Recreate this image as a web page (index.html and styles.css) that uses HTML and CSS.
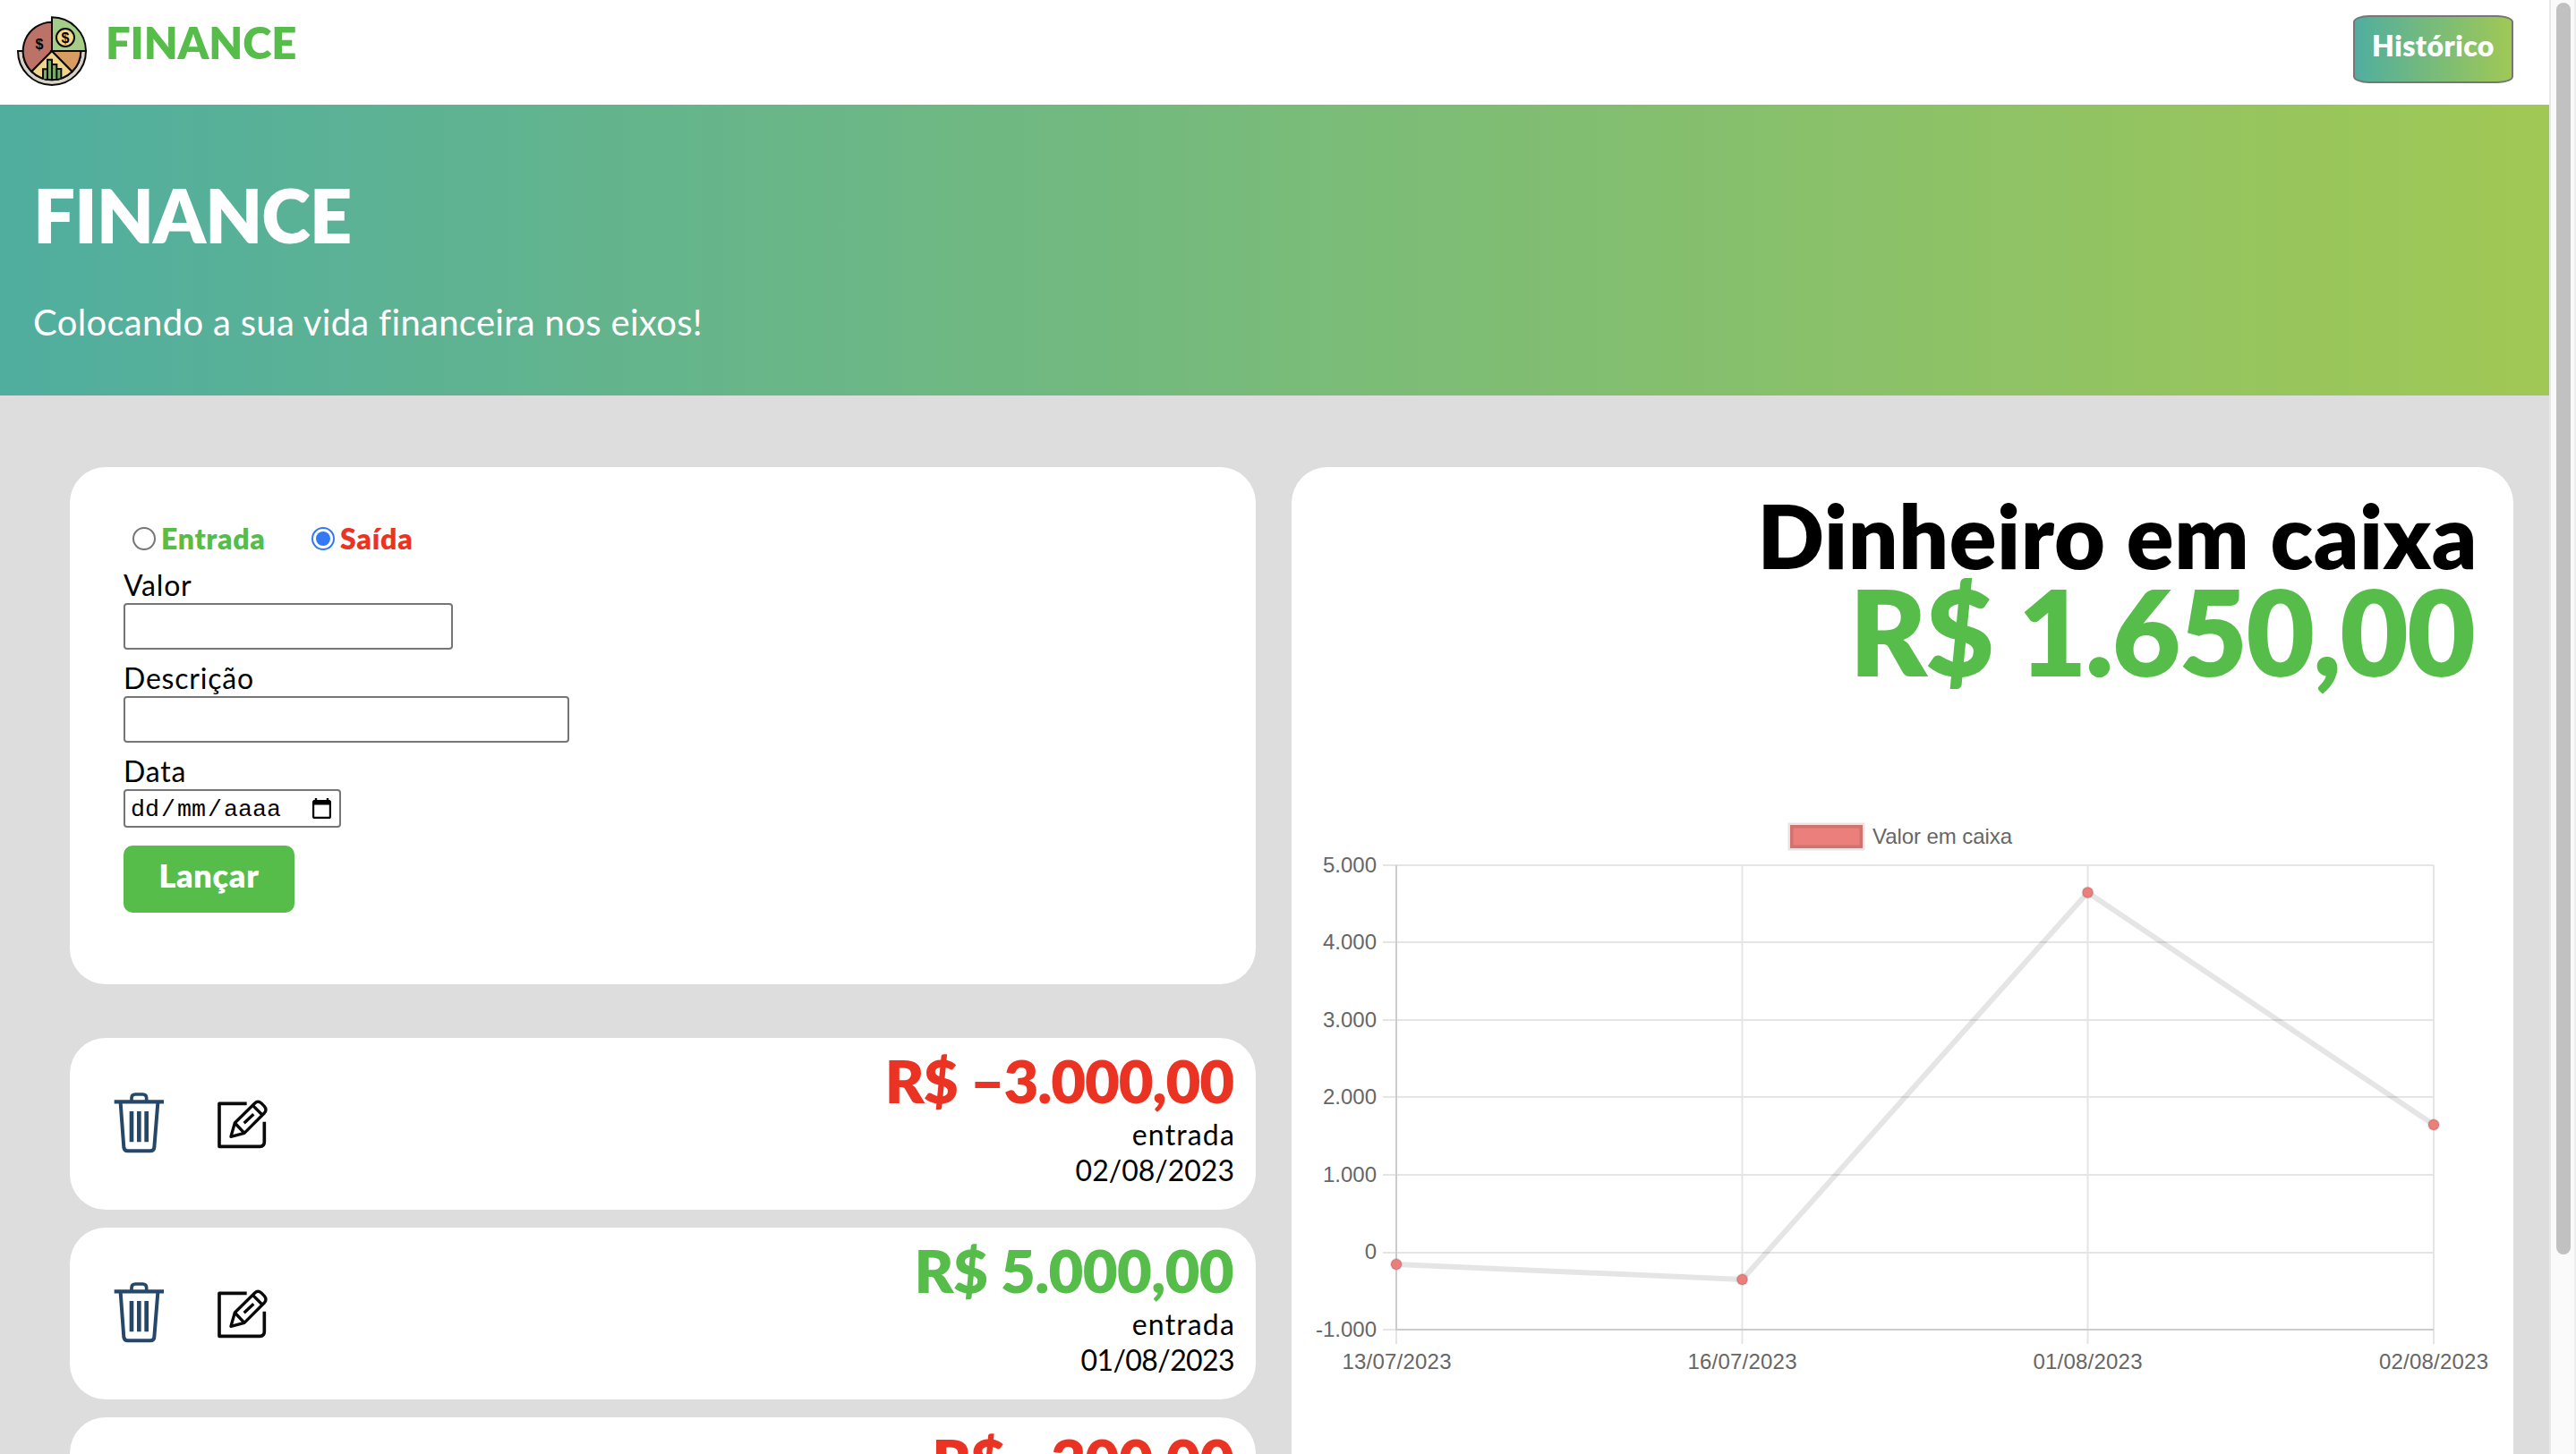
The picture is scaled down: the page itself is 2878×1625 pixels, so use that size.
FILE: index.html
```html
<!DOCTYPE html>
<html lang="pt-BR">
<head>
<meta charset="utf-8">
<title>Finance</title>
<link rel="stylesheet" href="styles.css">
</head>
<body>
<svg class="sprite" width="0" height="0">
  <symbol id="trash" viewBox="200 240 170 210">
    <g fill="none" stroke="#24476a" stroke-width="13" stroke-linejoin="round">
      <path d="M202 274H368"/>
      <path d="M260 270V262Q260 249 273 249H297Q310 249 310 262V270" stroke-width="11"/>
      <path d="M223 278L234 427Q236 439 247 439H323Q335 439 336 427L348 278" stroke-width="12"/>
      <path d="M260 306V409M285 306V409M310 306V409" stroke-width="14"/>
    </g>
  </symbol>
  <symbol id="edit" viewBox="545 265 175 170">
    <g fill="none" stroke="#0a0a0a" stroke-width="10" stroke-linejoin="round" stroke-linecap="butt">
      <path d="M646 281H554V425H690Q705 425 705 410V342" stroke-width="11"/>
      <path d="M593 392L606 346L673 280Q683 270 694 279L705 290Q715 302 705 313L638 380Z"/>
      <path d="M606 346L638 380M666 287L698 319M637 347L669 317"/>
    </g>
  </symbol>
</svg>
<div class="page">
  <header class="header">
    <div class="brand">
      <svg class="brand-logo" viewBox="57 54 234 234">
        <g stroke="#0b0b0b" stroke-width="6" stroke-linejoin="miter">
          <path d="M60 171A114 114 0 0 0 288 171H271V171A97 97 0 0 1 77 171Z" fill="#d9d2c9"/>
          <path d="M174 171V74A97 97 0 0 0 106 240Z" fill="#bd7268"/>
          <path d="M174 171L106 240A97 97 0 0 0 242 240Z" fill="#f2d58b"/>
          <path d="M174 171L242 240A97 97 0 0 0 271 171Z" fill="#d99c60"/>
          <path d="M174 171V58A114 114 0 0 1 288 171Z" fill="#a3cd89"/>
          <circle cx="219" cy="126" r="30" fill="#f5d68a"/>
          <path d="M144 265V232H159V200H174V216H190V231H205V262" fill="#79ab60"/>
          <path d="M159 232V266M174 216V268M190 231V265" fill="none"/>
        </g>
        <text class="coin" x="132" y="166">$</text>
        <text class="coin" x="219" y="143">$</text>
      </svg>
      <span class="brand-name">FINANCE</span>
    </div>
    <button class="history">Histórico</button>
  </header>
  <section class="hero">
    <h1 class="hero-title">FINANCE</h1>
    <p class="hero-text">Colocando a sua vida financeira nos eixos!</p>
  </section>
  <main class="content">
    <div class="left">
      <form class="card form">
        <div class="kinds">
          <label class="kind kind-in"><span class="radio"></span><span>Entrada</span></label>
          <label class="kind kind-out"><span class="radio radio-on"></span><span>Saída</span></label>
        </div>
        <label class="label label-valor">Valor</label>
        <div class="input input-valor"></div>
        <label class="label label-desc">Descrição</label>
        <div class="input input-desc"></div>
        <label class="label label-data">Data</label>
        <div class="input input-date">
          <span class="date-text"><span>dd</span><span>/</span><span>mm</span><span>/</span><span>aaaa</span></span>
          <svg class="calendar" viewBox="0 0 21 23"><path d="M4 0V4M17 0V4" stroke="#000" stroke-width="2.4"/><rect x="1.1" y="3.1" width="18.8" height="18.8" rx="1.5" fill="none" stroke="#000" stroke-width="2.2"/><path d="M1 2.5H20V7.500H1Z"/></svg>
        </div>
        <button class="submit" type="button">Lançar</button>
      </form>
      <div class="entries">
        <article class="card entry">
          <div class="actions"><svg class="trash"><use href="#trash"/></svg><svg class="edit"><use href="#edit"/></svg></div>
          <div class="info"><strong class="amount out">R$ –3.000,00</strong><span class="desc">entrada</span><span class="date">02/08/2023</span></div>
        </article>
        <article class="card entry">
          <div class="actions"><svg class="trash"><use href="#trash"/></svg><svg class="edit"><use href="#edit"/></svg></div>
          <div class="info"><strong class="amount in">R$ 5.000,00</strong><span class="desc">entrada</span><span class="date date-tight">01/08/2023</span></div>
        </article>
        <article class="card entry">
          <div class="actions"><svg class="trash"><use href="#trash"/></svg><svg class="edit"><use href="#edit"/></svg></div>
          <div class="info"><strong class="amount out">R$ –200,00</strong></div>
        </article>
      </div>
    </div>
    <section class="card balance">
      <h2 class="balance-title">Dinheiro em caixa</h2>
      <div class="balance-value">R$ 1.650,00</div>
      <svg class="chart" viewBox="1443 900 1365 660">
        <rect x="2000" y="922" width="81" height="26" fill="#ea7f7b"/>
        <rect x="2000.500" y="922.500" width="80" height="25" fill="none" stroke="#000" stroke-opacity=".1" stroke-width="6"/>
        <text x="2092" y="943" textLength="156">Valor em caixa</text>
        <g stroke="#e5e5e5" stroke-width="2">
          <path d="M1545 967H2719M1545 1053H2719M1545 1140H2719M1545 1226H2719M1545 1313H2719M1545 1400H2719M1545 1486H1560"/>
          <path d="M1946.500 967V1502M2332.500 967V1502M2719 967V1502M1560 1486V1502"/>
        </g>
        <path d="M1560 967V1486H2719" fill="none" stroke="#ccc" stroke-width="2"/>
        <path d="M1560 1413L1946.500 1430L2332.500 997.500L2719 1257" fill="none" stroke="#000" stroke-opacity=".1" stroke-width="6"/>
        <g fill="#ea7f7b" stroke="#000" stroke-opacity=".1" stroke-width="2">
          <circle cx="1560" cy="1413" r="6"/><circle cx="1946.500" cy="1430" r="6"/><circle cx="2332.500" cy="997.500" r="6"/><circle cx="2719" cy="1257" r="6"/>
        </g>
        <g text-anchor="end">
          <text x="1538" y="975">5.000</text><text x="1538" y="1061">4.000</text><text x="1538" y="1148">3.000</text><text x="1538" y="1234">2.000</text><text x="1538" y="1321">1.000</text><text x="1538" y="1407">0</text><text x="1538" y="1494">-1.000</text>
        </g>
        <g text-anchor="middle">
          <text x="1560.500" y="1530" textLength="122">13/07/2023</text><text x="1946.500" y="1530" textLength="122">16/07/2023</text><text x="2332.500" y="1530" textLength="122">01/08/2023</text><text x="2719" y="1530" textLength="122">02/08/2023</text>
        </g>
      </svg>
    </section>
  </main>
</div>
<div class="scrollbar"><div class="thumb"></div></div>
</body>
</html>
```
FILE: styles.css
```css
* { box-sizing: border-box; }
body {
  margin: 0;
  width: 2878px;
  height: 1625px;
  overflow: hidden;
  display: flex;
  background: #ddd;
  color: #000;
  font-family: Lato, "Liberation Sans", sans-serif;
  font-size: 32px;
  font-kerning: normal;
  font-variant-ligatures: none;
}
.sprite { position: absolute; }
h1, h2, p { margin: 0; }
.page { width: 2848px; height: 1625px; overflow: hidden; flex: none; }

.header {
  height: 117px;
  background: #fff;
  display: flex;
  justify-content: space-between;
  align-items: flex-start;
  padding: 17px 40px 0 19px;
}
.brand { display: flex; }
.brand-logo { width: 78px; height: 78px; margin: 1px 21px 0 0; }
.coin { font-family: "Liberation Sans", sans-serif; font-size: 48px; font-weight: bold; text-anchor: middle; }
.brand-name { color: #56bd4a; font-size: 49px; font-weight: 800; line-height: 60px; letter-spacing: -.15px; }
.history {
  width: 179px;
  height: 76px;
  padding: 0 0 8px;
  border: 2px solid #767676;
  border-radius: 10%;
  background: linear-gradient(90deg, #50ae9f, #a0c855);
  color: #fff;
  font: 800 32px/64px Lato, sans-serif;
  letter-spacing: .45px;
}

.hero {
  height: 325px;
  padding: 80px 37px 0;
  color: #fff;
  background: linear-gradient(90deg, #50ae9f, #a0c855);
}
.hero-title { font-size: 83px; font-weight: 800; line-height: 86px; letter-spacing: -1.1px; }
.hero-text { font-size: 40px; line-height: 50px; margin-top: 52px; letter-spacing: .32px; }

.content { display: flex; gap: 40px; padding: 80px 40px 0 78px; }
.card { background: #fff; border-radius: 40px; }
.left { width: 1325px; flex: none; }
.form { height: 578px; padding: 60px; display: flex; flex-direction: column; align-items: flex-start; }
.kinds { display: flex; height: 40px; margin-left: 10px; }
.kind { display: flex; align-items: center; line-height: 40px; font-weight: 800; gap: 6px; letter-spacing: .65px; }
.kind-in { color: #56bd4a; width: 200px; }
.kind-out { color: #eb3323; }
.radio { width: 26px; height: 26px; border: 2px solid #767676; border-radius: 50%; }
.radio-on { border-color: #3478f6; padding: 3px; background: #3478f6 content-box; }
.label { line-height: 40px; height: 40px; letter-spacing: .8px; }
.label-valor { margin-top: 12px; }
.label-desc, .label-data { margin-top: 12px; }
.input { height: 52px; border: 2px solid #767676; border-radius: 4px; }
.input-valor { width: 368px; }
.input-desc { width: 498px; }
.input-date { width: 243px; height: 43px; display: flex; justify-content: space-between; align-items: center; padding: 0 9px 0 6px; }
.date-text { display: flex; gap: 2px; padding-top: 2px; font: 26.67px/36px "Liberation Mono", monospace; }
.calendar { width: 21px; height: 23px; }
.submit { width: 191px; height: 75px; margin-top: 20px; padding: 0 0 9px; border: 0; border-radius: 10px; background: #56bd4a; color: #fff; font: 800 36px/64px Lato, sans-serif; letter-spacing: .7px; }

.entries { display: flex; flex-direction: column; gap: 20px; margin-top: 60px; }
.entry { height: 192px; display: flex; justify-content: space-between; padding: 0 25px 0 48.67px; }
.actions { display: flex; gap: 58.33px; padding-top: 60px; }
.trash { width: 56.67px; height: 70px; }
.edit { width: 58.33px; height: 56.67px; margin-top: 8.3px; }
.info { display: flex; flex-direction: column; align-items: flex-end; }
.amount { font-size: 67px; line-height: 80px; font-weight: 800; margin-top: 7px; }
.in { color: #56bd4a; letter-spacing: -.65px; }
.out { color: #eb3323; letter-spacing: -1.1px; }
.kind-out { letter-spacing: .8px; }
.desc, .date { line-height: 40px; }
.desc { margin: 1px -2px 0 0; letter-spacing: 1.15px; }
.date { margin-right: -1px; }
.date-tight { letter-spacing: -.6px; }

.balance { width: 1365px; height: 1200px; flex: none; display: flex; flex-direction: column; align-items: flex-end; }
.balance-title { font-size: 98px; font-weight: 800; line-height: 110px; margin: 21px 40px 0 0; letter-spacing: .6px; }
.balance-value { font-size: 132px; font-weight: 800; line-height: 130px; color: #56bd4a; margin: -13px 44px 0 0; letter-spacing: -1.7px; }
.chart { width: 1365px; height: 660px; margin-top: 130px; }
.chart text { font-family: "Liberation Sans", sans-serif; font-size: 24px; fill: #666; }

.scrollbar { width: 30px; height: 1625px; background: #fafafa; border-left: 2px solid #e8e8e8; border-right: 2px solid #efefef; padding: 3px 4px 0 6px; }
.thumb { width: 16px; height: 1399px; border-radius: 8px; background: #c1c1c1; }
```
